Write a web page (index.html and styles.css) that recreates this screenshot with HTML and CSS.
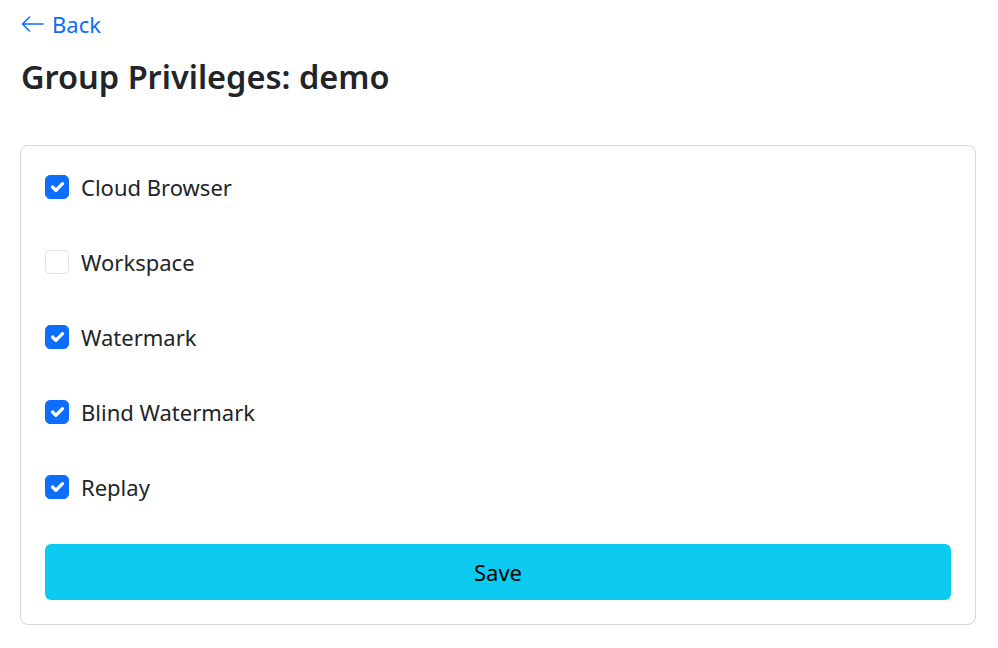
FILE: index.html
```html
<!DOCTYPE html>
<html lang="en">
<head>
  <meta charset="UTF-8" />
  <meta name="viewport" content="width=device-width, initial-scale=1.0"/>
  <title>Group Privileges</title>
  <link rel="stylesheet" href="styles.css">
</head>
<body>
  <div class="page">
    <a class="back" href="#">
      <svg class="back-arrow" width="23" height="16" viewBox="0 0 23 16" fill="none" stroke="currentColor" stroke-width="1.6" stroke-linecap="round" stroke-linejoin="round">
        <path d="M22 8H1.5M8.5 1 1.5 8l7 7"/>
      </svg>
      Back
    </a>
    <h2 class="title">Group Privileges: demo</h2>

    <form class="card">
      <div class="options">
        <label class="option">
          <input type="checkbox" checked>
          <span class="box"><svg viewBox="0 0 20 20" fill="none" stroke="#fff" stroke-width="3" stroke-linecap="round" stroke-linejoin="round"><path d="m6 10 3 3 6-6"/></svg></span>
          Cloud Browser
        </label>
        <label class="option">
          <input type="checkbox">
          <span class="box"><svg viewBox="0 0 20 20" fill="none" stroke="#fff" stroke-width="3" stroke-linecap="round" stroke-linejoin="round"><path d="m6 10 3 3 6-6"/></svg></span>
          Workspace
        </label>
        <label class="option">
          <input type="checkbox" checked>
          <span class="box"><svg viewBox="0 0 20 20" fill="none" stroke="#fff" stroke-width="3" stroke-linecap="round" stroke-linejoin="round"><path d="m6 10 3 3 6-6"/></svg></span>
          Watermark
        </label>
        <label class="option">
          <input type="checkbox" checked>
          <span class="box"><svg viewBox="0 0 20 20" fill="none" stroke="#fff" stroke-width="3" stroke-linecap="round" stroke-linejoin="round"><path d="m6 10 3 3 6-6"/></svg></span>
          Blind Watermark
        </label>
        <label class="option">
          <input type="checkbox" checked>
          <span class="box"><svg viewBox="0 0 20 20" fill="none" stroke="#fff" stroke-width="3" stroke-linecap="round" stroke-linejoin="round"><path d="m6 10 3 3 6-6"/></svg></span>
          Replay
        </label>
      </div>
      <button type="button" class="save">Save</button>
    </form>
  </div>
</body>
</html>
```

FILE: styles.css
```css
body {
  margin: 0;
  font-family: "Noto Sans", "Open Sans", sans-serif;
  color: #212529;
  background: #fff;
}

.page {
  padding: 8px 22px 0 20px;
}

.back {
  display: inline-flex;
  align-items: center;
  gap: 8px;
  margin-left: 1px;
  height: 32px;
  font-size: 22px;
  color: #0d6efd;
  text-decoration: none;
}

.title {
  margin: 17px 0 49px 1px;
  font-size: 32.5px;
  font-weight: 600;
  line-height: 1.2;
}

.card {
  border: 1px solid #d6d6d6;
  border-radius: 8px;
  padding: 24px;
}

.options {
  display: flex;
  flex-direction: column;
  gap: 41px;
}

.option {
  display: flex;
  align-items: center;
  gap: 12px;
  height: 34px;
  font-size: 22px;
  cursor: pointer;
}

.option input {
  display: none;
}

.box {
  width: 22px;
  height: 22px;
  border: 1px solid #dee2e6;
  border-radius: 5px;
  background: #fff;
  display: flex;
}

.box svg {
  width: 100%;
  height: 100%;
  visibility: hidden;
}

.option input:checked + .box {
  background: #0d6efd;
  border-color: #0d6efd;
}

.option input:checked + .box svg {
  visibility: visible;
}

.save {
  display: block;
  width: 100%;
  height: 56px;
  margin-top: 40px;
  border: none;
  border-radius: 6px;
  background: #0dcaf0;
  color: #000;
  font-family: inherit;
  font-size: 22px;
  cursor: pointer;
}

.save:hover {
  background: #31d2f2;
}
```
